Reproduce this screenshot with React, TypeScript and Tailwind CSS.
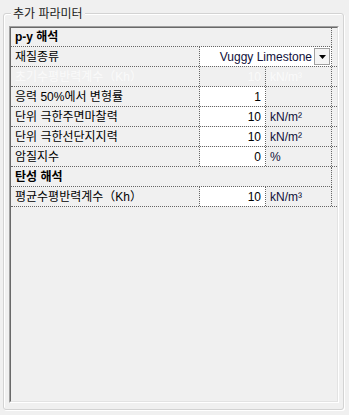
import React from "react";

const FONT = { fontFamily: '"Liberation Sans", "Noto Sans CJK KR", sans-serif' };

function LabelCell({ children, ghost }: { children?: React.ReactNode; ghost?: boolean }) {
  return (
    <div
      className={
        "w-[189px] shrink-0 h-full border-r border-dotted border-[#666666] pl-[4px] flex items-center whitespace-nowrap " +
        (ghost ? "text-[#fafafa]" : "text-[#000]")
      }
    >
      {children}
    </div>
  );
}

function DataRow({
  label,
  value,
  unit,
  ghost,
}: {
  label: string;
  value: string;
  unit: string;
  ghost?: boolean;
}) {
  return (
    <div className="flex h-[20px] border-b border-dotted border-[#666666]">
      <LabelCell ghost={ghost}>{label}</LabelCell>
      <div
        className={
          "w-[66px] shrink-0 h-full border-r border-dotted border-[#666666] pr-[4px] flex items-center justify-end " +
          (ghost ? "text-[#fafafa]" : "bg-white text-black")
        }
      >
        {value}
      </div>
      <div
        className={
          "w-[66px] shrink-0 h-full border-r border-dotted border-[#666666] pl-[4px] flex items-center " +
          (ghost ? "text-[#fafafa]" : "text-[#10103a]")
        }
      >
        {unit}
      </div>
    </div>
  );
}

function HeaderRow({ text, first }: { text: string; first?: boolean }) {
  return (
    <div
      className={
        "flex w-[321px] border-b border-r border-dotted border-[#666666] pl-[4px] items-center font-bold text-black " +
        (first ? "h-[19px]" : "h-[20px]")
      }
    >
      {text}
    </div>
  );
}

export default function App() {
  return (
    <div
      className="w-[349px] h-[415px] bg-[#f0f0f0] pt-[13px] pl-[3px] pr-[5px] text-[12px] leading-[16px]"
      style={FONT}
    >
      <div className="relative w-[341px] h-[397px] border border-[#d3d3d3] rounded-[3px] shadow-[1px_1px_0_#ffffff,inset_1px_1px_0_#ffffff] pt-[12px] pl-[5px]">
        <div className="absolute left-[7px] top-[-8px] px-[2px] bg-[#f0f0f0] text-[#1a1a1a] leading-[16px]">
          추가 파라미터
        </div>
        <div className="w-[330px] h-[377px] border border-t-[#a0a0a0] border-l-[#a0a0a0] border-r-white border-b-white">
          <div className="w-full h-full border border-t-[#696969] border-l-[#696969] border-r-[#e3e3e3] border-b-[#e3e3e3]">
            <HeaderRow text="p-y 해석" first />
            <div className="flex h-[20px] border-b border-dotted border-[#666666]">
              <LabelCell>재질종류</LabelCell>
              <div className="w-[132px] shrink-0 h-full border-r border-dotted border-[#666666] bg-white flex items-center justify-end pr-[1px]">
                <span className="text-[#10103a] mr-[2px] whitespace-nowrap">Vuggy Limestone</span>
                <div className="w-[16px] h-[17px] border border-[#a0a0a0] bg-[#f4f4f4] flex items-center justify-center">
                  <svg width="7" height="4" viewBox="0 0 7 4">
                    <path d="M0 0 H7 L3.5 4 Z" fill="#000" />
                  </svg>
                </div>
              </div>
            </div>
            <DataRow label="초기수평반력계수（Kh）" value="10" unit="kN/m³" ghost />
            <DataRow label="응력 50%에서 변형률" value="1" unit="" />
            <DataRow label="단위 극한주면마찰력" value="10" unit="kN/m²" />
            <DataRow label="단위 극한선단지지력" value="10" unit="kN/m²" />
            <DataRow label="암질지수" value="0" unit="%" />
            <HeaderRow text="탄성 해석" />
            <DataRow label="평균수평반력계수（Kh）" value="10" unit="kN/m³" />
          </div>
        </div>
      </div>
    </div>
  );
}
